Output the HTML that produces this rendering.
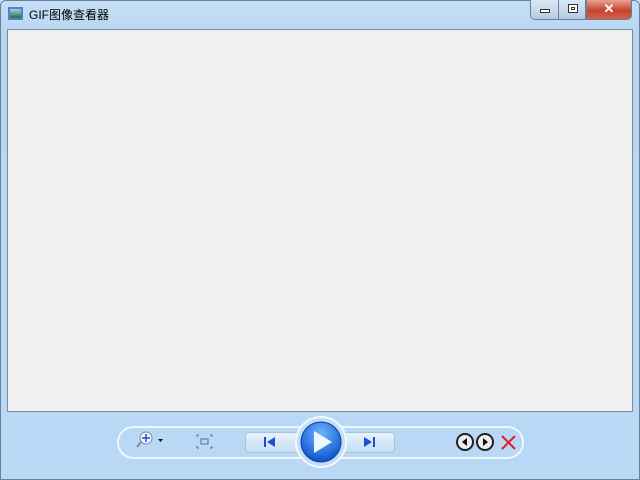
<!DOCTYPE html>
<html><head><meta charset="utf-8"><style>
*{margin:0;padding:0;box-sizing:border-box}
body{width:640px;height:480px;overflow:hidden;background:linear-gradient(#c6def5,#b9d7f4 30px,#b9d8f5);position:relative;font-family:"Liberation Sans","Noto Sans CJK SC",sans-serif}
.win{position:absolute;inset:0;border:1px solid #6b7f95;border-radius:6px 6px 0 0}
.title{position:absolute;left:29px;top:6px;font-size:12px;color:#000}
.ico{position:absolute;left:8px;top:7px;width:15px;height:13px;border:2px solid #4a86c0;background:linear-gradient(#9fd0f0,#2c6a3a)}
.client{position:absolute;left:7px;top:29px;width:626px;height:383px;background:#f0f0f0;border:1px solid #7a8a9c}
.cb{position:absolute;top:0;height:20px;border:1px solid #6d7f96;border-top:none;background:linear-gradient(#dbe8f5,#b5cbe3)}
.bar{position:absolute;left:117px;top:426px;width:407px;height:33px;border:2px solid #eef6fe;border-radius:17px}
.btn{position:absolute;top:432px;height:21px;border:1px solid #a9c2dc;background:linear-gradient(#e6f1fc,#c9def3);border-radius:4px}
</style></head><body>
<div class="win"></div>
<div class="ico"></div>
<div class="title">GIF图像查看器</div>
<div class="cb" style="left:530px;width:29px;border-radius:0 0 0 5px"><div style="position:absolute;left:9px;top:9px;width:10px;height:4px;border:1px solid #333;background:#fff"></div></div>
<div class="cb" style="left:558px;width:28px"><div style="position:absolute;left:9px;top:4px;width:10px;height:9px;border:1px solid #333;background:#fff"><div style="margin:2px;height:3px;border:1px solid #333"></div></div></div>
<div class="cb" style="left:586px;width:46px;background:linear-gradient(#e9a194,#c7442e 55%,#d5604a);border-radius:0 0 5px 0;color:#fff;font-weight:bold;font-size:13px;text-align:center;line-height:18px">✕</div>
<div class="client"></div>
<div class="bar"></div>
<svg style="position:absolute;left:136px;top:430px" width="30" height="24"><circle cx="10" cy="8" r="6" fill="#eef4ff" stroke="#7a8ca8"/><path d="M10 4v8M6 8h8" stroke="#2b44d8" stroke-width="1.5"/><path d="M5 12L1 17" stroke="#888" stroke-width="2"/><path d="M22 9h5l-2.5 3z" fill="#111"/></svg>
<svg style="position:absolute;left:196px;top:434px" width="18" height="16"><rect x="5" y="5" width="7" height="5" fill="none" stroke="#4b6ea3"/><path d="M1 1h2M1 1v2M16 1h-2M16 1v2M1 14h2M1 14v-2M16 14h-2M16 14v-2" stroke="#4b6ea3"/></svg>
<div class="btn" style="left:245px;width:54px"></div>
<div class="btn" style="left:343px;width:52px"></div>
<svg style="position:absolute;left:263px;top:436px" width="14" height="12"><rect x="1" y="1" width="2" height="10" fill="#1d4fd6"/><path d="M12 1v10L4 6z" fill="#1d4fd6"/></svg>
<svg style="position:absolute;left:362px;top:436px" width="14" height="12"><rect x="11" y="1" width="2" height="10" fill="#1d4fd6"/><path d="M2 1v10l8-5z" fill="#1d4fd6"/></svg>
<svg style="position:absolute;left:295px;top:415px" width="52" height="54"><defs><radialGradient id="g" cx=".5" cy=".3" r=".7"><stop offset="0" stop-color="#6fb6ff"/><stop offset="1" stop-color="#0a52cc"/></radialGradient></defs><circle cx="26" cy="27" r="25" fill="#c3ddf7" stroke="#f2f8ff" stroke-width="2"/><circle cx="26" cy="27" r="20" fill="url(#g)" stroke="#0b3f9c"/><path d="M19 16v22l18-11z" fill="#eef6ff"/></svg>
<svg style="position:absolute;left:455px;top:432px" width="65" height="20"><circle cx="10" cy="10" r="8" fill="#eee" stroke="#222" stroke-width="2"/><path d="M12 6v8l-5-4z" fill="#111"/><circle cx="30" cy="10" r="8" fill="#eee" stroke="#222" stroke-width="2"/><path d="M28 6v8l5-4z" fill="#111"/><path d="M47 4l13 13M60 4l-13 13" stroke="#e0201c" stroke-width="2"/></svg>
</body></html>
